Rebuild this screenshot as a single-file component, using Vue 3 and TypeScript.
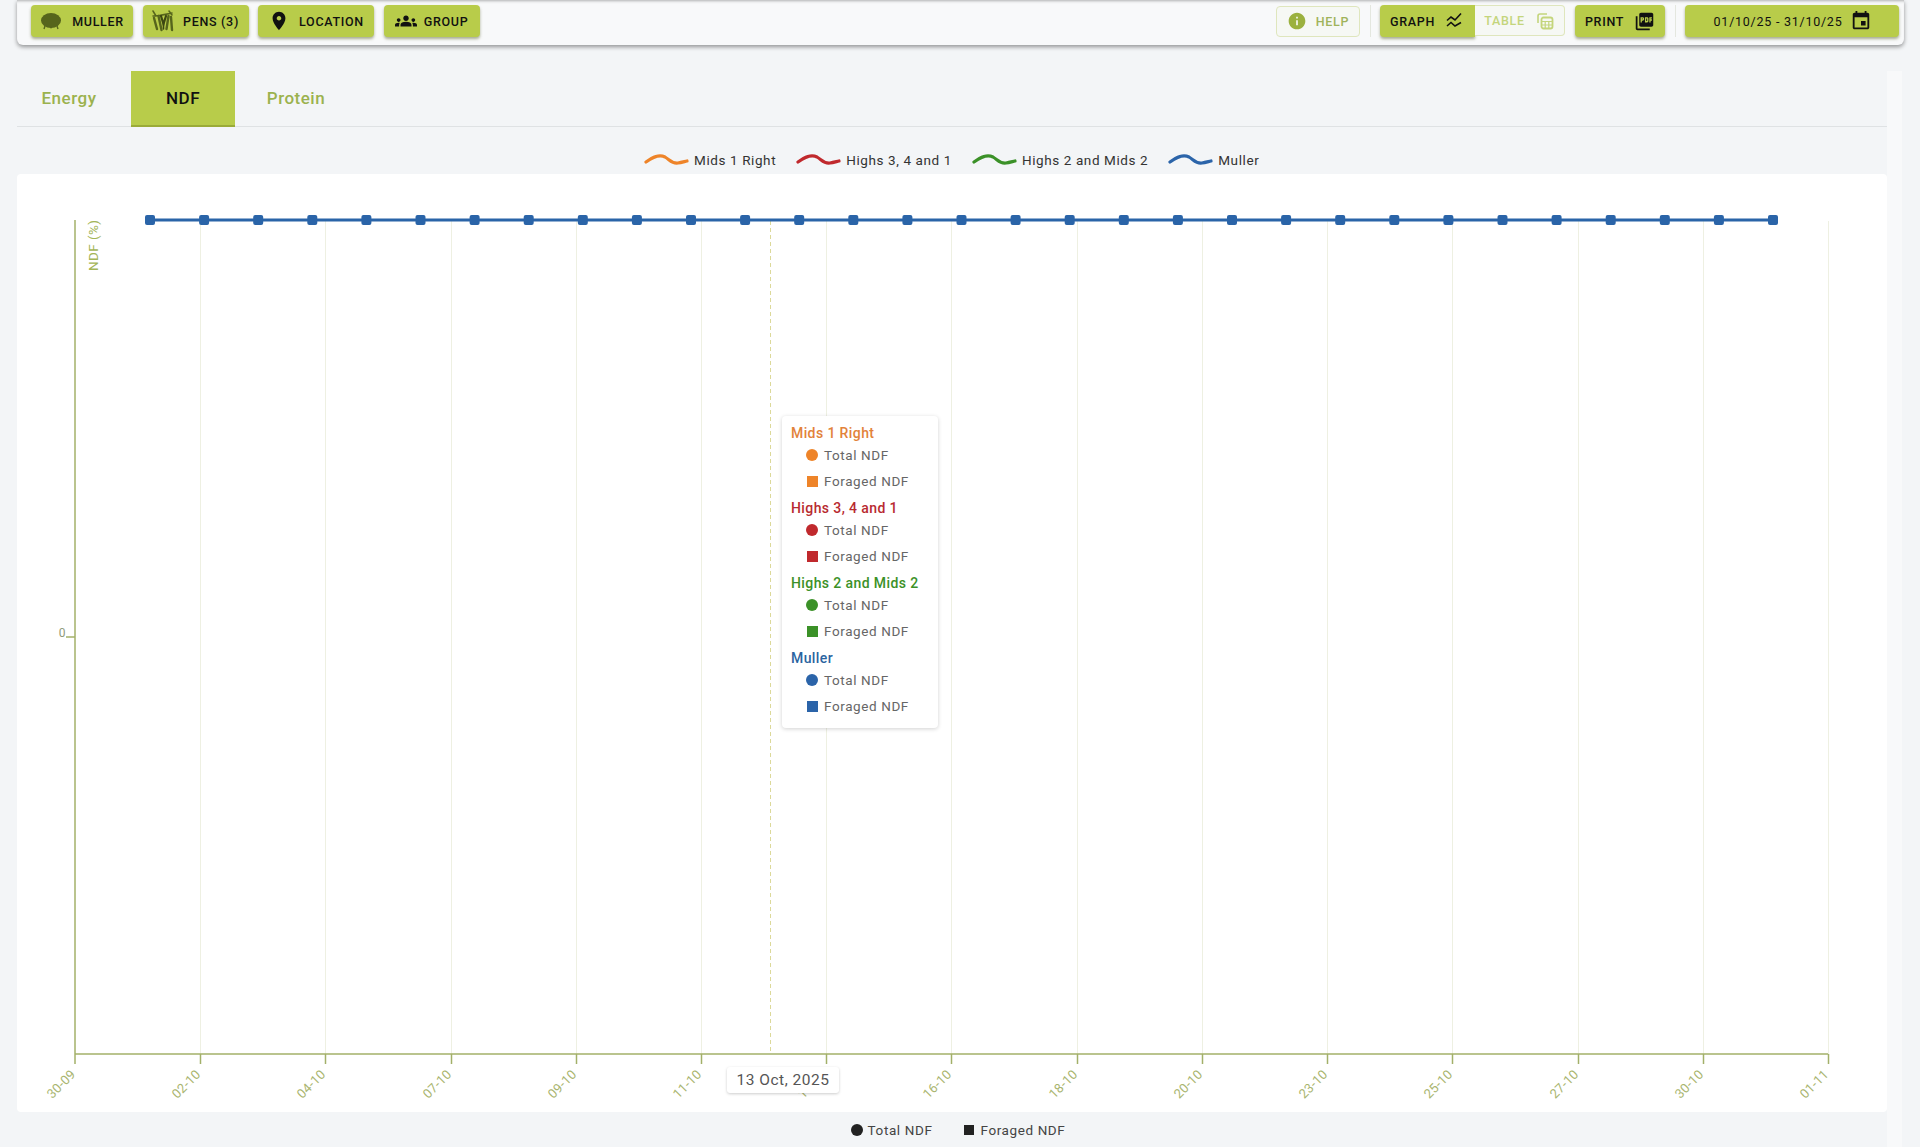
<template>
  <div class="page">
    <header class="toolbar">
      <div class="tool-group">
        <button class="btn btn-muller">
          <svg class="ico" width="22" height="20" viewBox="0 0 22 20">
            <ellipse cx="11" cy="9.5" rx="10" ry="7.5" fill="#56651c" />
            <path d="M5 15l-1 3M17 15l1 3M10 16.5h2" stroke="#56651c" stroke-width="1.4" fill="none" />
          </svg>
          <span>Muller</span>
        </button>
        <button class="btn btn-pens">
          <svg class="ico" width="22" height="22" viewBox="0 0 22 22">
            <g fill="none" stroke="#56651c" stroke-linecap="round">
              <path d="M1 6c5 0 14-2 19-3M1 1l3 5M17 1l3 4" stroke-width="1.500" />
              <path d="M2 8l3 11M6.500 6l3 14M16.500 6l-2 13M19 7l1 13" stroke-width="2.400" />
              <path d="M9 6l2.500 8 2.500-8" stroke="#3c4712" stroke-width="2.200" />
              <path d="M11.500 13v6" stroke="#3c4712" stroke-width="1.600" />
            </g>
          </svg>
          <span>Pens (3)</span>
        </button>
        <button class="btn btn-location">
          <svg class="ico" width="22" height="22" viewBox="0 0 24 24">
            <path fill="#111" d="M12 2C8.130 2 5 5.130 5 9c0 5.250 7 13 7 13s7-7.750 7-13c0-3.870-3.130-7-7-7zm0 9.500c-1.380 0-2.500-1.120-2.500-2.500s1.120-2.500 2.500-2.500 2.500 1.120 2.500 2.500-1.120 2.500-2.500 2.500z" />
          </svg>
          <span>Location</span>
        </button>
        <button class="btn btn-group">
          <svg class="ico" width="22" height="22" viewBox="0 0 24 24">
            <path fill="#111" d="M12 12.75c1.63 0 3.07.39 4.24.9 1.08.48 1.76 1.56 1.76 2.73V18H6v-1.61c0-1.18.68-2.26 1.76-2.73 1.17-.52 2.61-.91 4.24-.91zM4 13c1.1 0 2-.9 2-2s-.9-2-2-2-2 .9-2 2 .9 2 2 2zm1.13 1.1c-.37-.06-.74-.1-1.13-.1-.99 0-1.93.21-2.78.58C.48 14.9 0 15.62 0 16.43V18h4.5v-1.61c0-.83.23-1.61.63-2.29zM20 13c1.1 0 2-.9 2-2s-.9-2-2-2-2 .9-2 2 .9 2 2 2zm4 3.43c0-.81-.48-1.53-1.22-1.85-.85-.37-1.79-.58-2.78-.58-.39 0-.76.04-1.13.1.4.68.63 1.46.63 2.29V18H24v-1.57zM12 6c1.66 0 3 1.34 3 3s-1.34 3-3 3-3-1.34-3-3 1.34-3 3-3z" />
          </svg>
          <span>Group</span>
        </button>
      </div>

      <div class="tool-group tool-right">
        <button class="btn-flat btn-help">
          <svg class="ico" width="20" height="20" viewBox="0 0 24 24">
            <path fill="#9bb13f" d="M12 2C6.48 2 2 6.48 2 12s4.48 10 10 10 10-4.48 10-10S17.52 2 12 2zm1 15h-2v-6h2v6zm0-8h-2V7h2v2z" />
          </svg>
          <span>Help</span>
        </button>
        <div class="sep"></div>
        <div class="toggle">
          <button class="btn btn-graph">
            <span>Graph</span>
            <svg class="ico" width="20" height="20" viewBox="0 0 20 20">
              <path d="M2 9.500l4-3.500 4 3 6-6.500" fill="none" stroke="#111" stroke-width="1.600" />
              <path d="M2 15l4-3.500 4 3.500 6-3.500" fill="none" stroke="#111" stroke-width="1.600" />
            </svg>
          </button>
          <button class="btn-flat btn-table">
            <span>Table</span>
            <svg class="ico" width="20" height="20" viewBox="0 0 20 20">
              <path d="M3 12V5a2 2 0 0 1 2-2h7" fill="none" stroke="#c4d57c" stroke-width="1.600" />
              <rect x="6.500" y="6.500" width="11" height="11" rx="2" fill="none" stroke="#c4d57c" stroke-width="1.800" />
              <path d="M6.500 10.500h11M6.500 14h11M10.200 10.500v7M13.800 10.500v7" stroke="#c4d57c" stroke-width="1.200" />
            </svg>
          </button>
        </div>
        <button class="btn btn-print">
          <span>Print</span>
          <svg class="ico" width="21" height="21" viewBox="0 0 24 24">
            <path fill="#111" d="M20 2H8c-1.1 0-2 .9-2 2v12c0 1.1.9 2 2 2h12c1.1 0 2-.9 2-2V4c0-1.1-.9-2-2-2zm-8.500 7.500c0 .83-.67 1.500-1.500 1.500H9v2H7.500V7H10c.83 0 1.500.67 1.500 1.500v1zm5 2c0 .83-.67 1.500-1.500 1.500h-2.500V7H15c.83 0 1.500.67 1.500 1.500v3zm4-3H19v1h1.500V11H19v2h-1.500V7h3v1.500zM9 9.500h1v-1H9v1zM4 6H2v14c0 1.1.9 2 2 2h14v-2H4V6zm10 5.500h1v-3h-1v3z" />
          </svg>
        </button>
        <div class="sep"></div>
        <button class="btn btn-date">
          <span>01/10/25 - 31/10/25</span>
          <svg class="ico" width="22" height="22" viewBox="0 0 24 24">
            <path fill="#111" d="M17 12h-5v5h5v-5zM16 1v2H8V1H6v2H5c-1.11 0-1.99.9-1.99 2L3 19c0 1.1.89 2 2 2h14c1.1 0 2-.9 2-2V5c0-1.1-.9-2-2-2h-1V1h-2zm3 18H5V8h14v11z" />
          </svg>
        </button>
      </div>
    </header>

    <div class="content">
      <main class="main">
        <nav class="tabs">
          <a v-for="tab in tabs" :key="tab" class="tab" :class="{ active: tab === activeTab }">{{ tab }}</a>
        </nav>

        <div class="legend">
          <div v-for="s in series" :key="s.name" class="legend-item">
            <svg width="46" height="16" viewBox="0 0 46 16">
              <path d="M2 10C9 5 15 2 21 5c5 3 7 7 13 6 3-.4 6-1.300 9-2" fill="none" :stroke="s.color" stroke-width="3.200" stroke-linecap="round" />
            </svg>
            <span>{{ s.name }}</span>
          </div>
        </div>

        <section class="chart-card">
          <svg class="chart" width="1870" height="938" viewBox="17 174 1870 938">
            <g stroke="#eef0e2" stroke-width="1">
              <line v-for="t in ticks.slice(1)" :key="t.label" :x1="t.x" :x2="t.x" y1="221" y2="1054" />
            </g>
            <line x1="770.500" x2="770.500" y1="221" y2="1054" stroke="#dcd99a" stroke-dasharray="4 3" />
            <g stroke="#a3b069" stroke-width="1.500">
              <line x1="75" x2="75" y1="220" y2="1064" />
              <line x1="75" x2="1828" y1="1054" y2="1054" />
              <line v-for="t in ticks.slice(1)" :key="t.label" :x1="t.x" :x2="t.x" y1="1054" y2="1064" />
              <line x1="66" x2="75" y1="637" y2="637" />
            </g>
            <text class="y-zero" x="65.500" y="637" text-anchor="end">0</text>
            <text class="y-title" transform="translate(98 271) rotate(-90)">NDF (%)</text>
            <text
              v-for="t in ticks"
              :key="t.label"
              class="x-label"
              text-anchor="end"
              :transform="`translate(${t.x + 1} 1075) rotate(-45)`"
            >{{ t.label }}</text>
            <line x1="150" x2="1773" y1="220" y2="220" stroke="#2a64a8" stroke-width="2.800" />
            <rect
              v-for="x in points"
              :key="x"
              :x="x - 5"
              y="215"
              width="10"
              height="10"
              rx="2"
              fill="#2a64a8"
            />
          </svg>

          <div class="tooltip">
            <div v-for="s in series" :key="s.name" class="tip-group">
              <div class="tip-title" :style="{ color: s.title }">{{ s.name }}</div>
              <div class="tip-row">
                <i class="dot" :style="{ background: s.color }"></i>Total NDF
              </div>
              <div class="tip-row">
                <i class="sq" :style="{ background: s.color }"></i>Foraged NDF
              </div>
            </div>
          </div>
          <div class="date-tip">13 Oct, 2025</div>
        </section>

        <div class="bottom-legend">
          <span class="key"><i class="dot dark"></i>Total NDF</span>
          <span class="key"><i class="sq dark"></i>Foraged NDF</span>
        </div>
      </main>
      <div class="track"></div>
    </div>
  </div>
</template>

<script setup lang="ts">
const tabs = ['Energy', 'NDF', 'Protein']
const activeTab = 'NDF'

const series = [
  { name: 'Mids 1 Right', color: '#ee8429', title: '#e2823a' },
  { name: 'Highs 3, 4 and 1', color: '#c0292d', title: '#b82a30' },
  { name: 'Highs 2 and Mids 2', color: '#3b9128', title: '#3b9128' },
  { name: 'Muller', color: '#2b64a9', title: '#2b64a0' }
]

const tickLabels = [
  '30-09', '02-10', '04-10', '07-10', '09-10', '11-10', '13-10', '16-10',
  '18-10', '20-10', '23-10', '25-10', '27-10', '30-10', '01-11'
]

const ticks = tickLabels.map((label, i) => ({
  label,
  x: Math.round(75 + i * 125.21) + 0.5
}))

const points = Array.from({ length: 31 }, (_, i) => 150 + i * 54.1)
</script>

<style>
html,
body {
  margin: 0;
  background: #f3f5f7;
}
</style>

<style scoped>
.page {
  width: 1920px;
  height: 1147px;
  overflow: hidden;
  background: #f3f5f7;
  font-family: Roboto, "Liberation Sans", sans-serif;
  color: #222;
}

.toolbar {
  height: 45px;
  margin: 0 16px 0 17px;
  padding: 5px 5px 0 14px;
  box-sizing: border-box;
  display: flex;
  justify-content: space-between;
  align-items: flex-start;
  background: #f8f9fa;
  border-radius: 0 0 6px 6px;
  box-shadow: 0 2px 4px rgba(0, 0, 0, 0.4), inset 0 3px 3px -2px rgba(0, 0, 0, 0.3);
}

.tool-group {
  display: flex;
  align-items: center;
  gap: 9.500px;
}

.tool-right {
  gap: 10px;
}

.btn,
.btn-flat {
  height: 32px;
  box-sizing: border-box;
  display: flex;
  align-items: center;
  justify-content: center;
  font-family: inherit;
  font-size: 12.500px;
  font-weight: 500;
  letter-spacing: 0.7px;
  text-transform: uppercase;
  border-radius: 4px;
  padding: 0;
}

.btn {
  border: none;
  color: #111;
  background: #b8cc4a;
  box-shadow: 0 2px 3px rgba(70, 80, 20, 0.45);
}

.btn-flat {
  border: 1px solid #dfe6bd;
  background: #f6f8f4;
  color: #9bb13f;
}

.ico {
  flex: none;
}

.btn-muller {
  width: 102px;
  gap: 10px;
}

.btn-pens {
  width: 106px;
  gap: 9px;
}

.btn-location {
  width: 116px;
  gap: 9px;
}

.btn-group {
  width: 96px;
  gap: 7px;
}

.btn-help {
  width: 84px;
  height: 31px;
  gap: 9px;
  color: #a0b35a;
}

.sep {
  width: 1px;
  height: 32px;
  margin-right: -1px;
  background: #e4e7df;
}

.toggle {
  display: flex;
}

.btn-graph {
  width: 95px;
  gap: 10px;
  border-radius: 4px 0 0 4px;
}

.btn-table {
  width: 90px;
  height: 31px;
  gap: 10px;
  color: #c4d57c;
  border-left: none;
  border-radius: 0 4px 4px 0;
}

.btn-print {
  width: 90px;
  gap: 10px;
}

.btn-date {
  width: 214px;
  gap: 8px;
  padding-left: 2px;
  letter-spacing: 0.75px;
  font-weight: 400;
}

.content {
  margin: 26px 0 0 17px;
  width: 1885px;
  display: flex;
}

.main {
  width: 1870px;
}

.track {
  width: 15px;
  background: #f8f9fa;
}

.tabs {
  height: 56px;
  box-sizing: border-box;
  display: flex;
  border-bottom: 1px solid #dfe2e4;
}

.tab {
  width: 104px;
  height: 56px;
  box-sizing: border-box;
  display: flex;
  align-items: center;
  justify-content: center;
  padding-bottom: 2px;
  font-size: 17px;
  font-weight: 500;
  letter-spacing: 0.5px;
  color: #9bb24e;
}

.tab:first-child {
  width: 114px;
  padding-right: 10px;
}

.tab:last-child {
  width: 122px;
}

.tab.active {
  padding-bottom: 0;
  color: #111;
  background: #b8cc4a;
  border-bottom: 2px solid #9aab38;
}

.legend {
  height: 47px;
  padding: 19px 0 0 627px;
  display: flex;
  align-items: center;
  gap: 20px;
  box-sizing: border-box;
  font-size: 13.500px;
  letter-spacing: 0.6px;
  color: #333;
}

.legend-item {
  display: flex;
  align-items: center;
  gap: 4px;
}

.chart-card {
  position: relative;
  height: 938px;
  background: #fff;
  border-radius: 4px;
}

.chart {
  display: block;
}

.x-label {
  font-size: 13px;
  letter-spacing: 0.3px;
  fill: #a9b56f;
}

.y-zero {
  font-size: 12px;
  fill: #8f9a7a;
}

.y-title {
  font-size: 13.500px;
  letter-spacing: 0.4px;
  fill: #a3b557;
}

.tooltip {
  position: absolute;
  left: 765px;
  top: 242px;
  width: 156px;
  height: 312px;
  box-sizing: border-box;
  padding: 7px 9px 0;
  background: #fff;
  border-radius: 4px;
  box-shadow: 0 1px 4px rgba(0, 0, 0, 0.18);
}

.tip-group {
  margin-bottom: 4px;
}

.tip-title {
  height: 20px;
  line-height: 20px;
  margin-bottom: -1px;
  font-size: 14px;
  font-weight: 500;
  letter-spacing: 0.4px;
  white-space: nowrap;
}

.tip-row {
  height: 26px;
  display: flex;
  align-items: center;
  padding-left: 15px;
  font-size: 13.500px;
  letter-spacing: 0.6px;
  color: #666;
}

.dot,
.sq {
  display: block;
  flex: none;
  margin-right: 6px;
}

.dot {
  width: 12px;
  height: 12px;
  border-radius: 50%;
}

.sq {
  width: 11px;
  height: 11px;
  margin-left: 1px;
  margin-right: 6px;
}

.dark {
  background: #222;
}

.date-tip {
  position: absolute;
  left: 710px;
  top: 893px;
  width: 112px;
  height: 26px;
  line-height: 26px;
  text-align: center;
  font-size: 15.500px;
  letter-spacing: 0.5px;
  color: #555;
  background: #fff;
  border-radius: 3px;
  box-shadow: 0 1px 3px rgba(0, 0, 0, 0.2);
}

.bottom-legend {
  height: 35px;
  padding-left: 12px;
  display: flex;
  align-items: center;
  justify-content: center;
  gap: 31px;
  font-size: 13.500px;
  letter-spacing: 0.6px;
  color: #444;
}

.key {
  display: flex;
  align-items: center;
}

.key .dot {
  margin-right: 5px;
}

.key .sq {
  width: 10px;
  height: 10px;
  margin-right: 6px;
}
</style>
